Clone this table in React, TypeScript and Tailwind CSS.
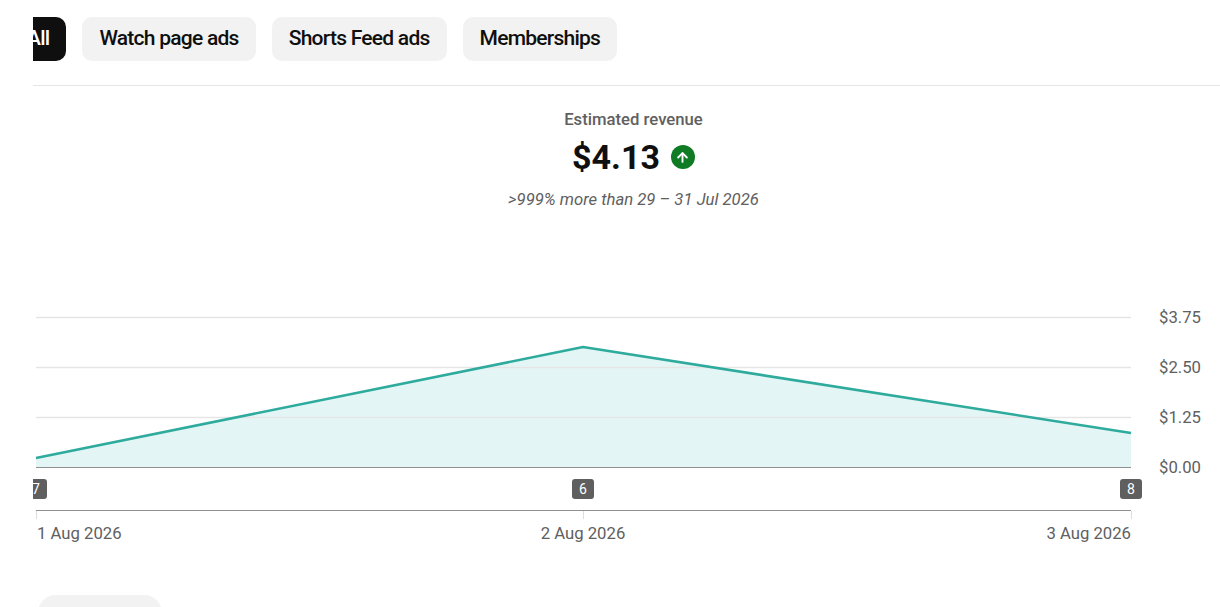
import { ArrowUp } from "lucide-react";

const chips = ["Watch page ads", "Shorts Feed ads", "Memberships"];

const yLabels = [
  { y: 17, text: "$3.75" },
  { y: 67, text: "$2.50" },
  { y: 117, text: "$1.25" },
  { y: 167, text: "$0.00" },
];

const badges = [
  { x: 3, text: "7" },
  { x: 550, text: "6" },
  { x: 1098, text: "8" },
];

const RevenueChart = () => (
  <svg width="1187" height="250" className="block overflow-visible" style={{ fontFamily: "Roboto, sans-serif" }}>
    <polygon points="3,158 550,47 1098,133 1098,167 3,167" fill="#e3f6f5" />
    {yLabels.slice(0, 3).map((l) => (
      <line key={l.y} x1="3" x2="1098" y1={l.y + 0.5} y2={l.y + 0.5} stroke="#e5e5e5" strokeWidth="1.5" />
    ))}
    <line x1="3" x2="1098" y1="167.5" y2="167.5" stroke="#909090" strokeWidth="1" />
    <polyline points="3,158 550,47 1098,133" fill="none" stroke="#2eab9d" strokeWidth="2.6" strokeLinejoin="round" />
    {yLabels.map((l) => (
      <text key={l.text} x="1126" y={l.y + 6} fontSize="16.7" fill="#606060">
        {l.text}
      </text>
    ))}
    {badges.map((b) => (
      <g key={b.text}>
        <rect x={b.x - 11} y="179" width="22" height="20" rx="3" fill="#5f5f5f" />
        <text x={b.x} y="194" fontSize="14" fill="#ffffff" textAnchor="middle">
          {b.text}
        </text>
      </g>
    ))}
    <line x1="3" x2="1098" y1="210.5" y2="210.5" stroke="#909090" strokeWidth="1" />
    {[3, 550, 1098].map((x) => (
      <line key={x} x1={x + 0.5} x2={x + 0.5} y1="211" y2="219" stroke="#dddddd" strokeWidth="1" />
    ))}
    <text x="4" y="239" fontSize="16.7" fill="#606060">
      1 Aug 2026
    </text>
    <text x="550" y="239" fontSize="16.7" fill="#606060" textAnchor="middle">
      2 Aug 2026
    </text>
    <text x="1098" y="239" fontSize="16.7" fill="#606060" textAnchor="end">
      3 Aug 2026
    </text>
  </svg>
);

export default function App() {
  return (
    <div className="h-[607px] w-[1220px] overflow-hidden bg-white font-['Roboto',sans-serif]">
      <div className="ml-[33px] overflow-hidden">
        {/* filter chips, scrolled a little to the left */}
        <div className="mt-[17px] ml-[-23px] flex gap-[16px]">
          <div className="flex h-[44px] items-center rounded-[10px] bg-[#0f0f0f] px-[17px] text-[21px] font-medium tracking-[-0.75px] text-white">
            All
          </div>
          {chips.map((c) => (
            <div
              key={c}
              className="flex h-[44px] items-center rounded-[10px] bg-[#f2f2f2] px-[17px] text-[21px] font-medium tracking-[-0.75px] text-[#0f0f0f]"
            >
              {c}
            </div>
          ))}
        </div>
        <div className="mt-[24px] border-t border-[#e5e5e5]" />

        <div className="w-[1201px] text-center">
          <div className="mt-[22px] text-[16.7px] leading-6 font-medium text-[#606060]">Estimated revenue</div>
          <div className="mt-[5px] flex items-center justify-center gap-[11px]">
            <span className="text-[34px] leading-10 font-bold text-[#0f0f0f]">$4.13</span>
            <span className="flex h-[24px] w-[24px] items-center justify-center rounded-full bg-[#0f7b24]">
              <ArrowUp size={15} strokeWidth={3} className="text-white" />
            </span>
          </div>
          <div className="mt-[11px] text-[16.7px] leading-6 italic text-[#606060]">
            &gt;999% more than 29 – 31 Jul 2026
          </div>
        </div>

        <div className="mt-[88px]">
          <RevenueChart />
        </div>

        <div className="mt-[45px] ml-[5px] h-[36px] w-[124px] rounded-full bg-[#f2f2f2]" />
      </div>
    </div>
  );
}
